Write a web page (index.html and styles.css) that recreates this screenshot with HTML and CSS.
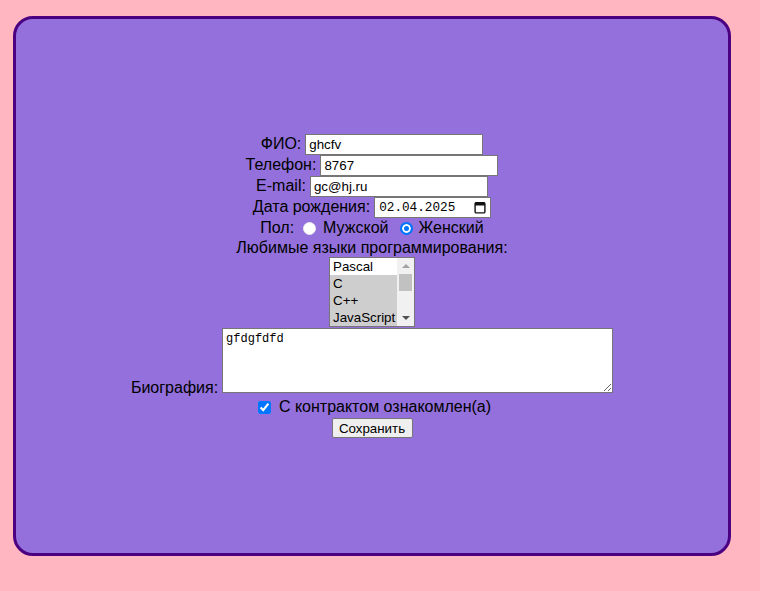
FILE: index.html
```html
<!DOCTYPE html>
<html lang="ru">
<head>
<meta charset="utf-8">
<title>Форма</title>
<link rel="stylesheet" href="styles.css">
</head>
<body>
<div class="page">
  <div class="card">
    <form class="form">
      <div class="row"><label class="lbl">ФИО:</label><input class="text" type="text" value="ghcfv"></div>
      <div class="row"><label class="lbl">Телефон:</label><input class="text" type="text" value="8767"></div>
      <div class="row"><label class="lbl">E-mail:</label><input class="text" type="text" value="gc@hj.ru"></div>
      <div class="row"><label class="lbl">Дата рождения:</label>
        <div class="date"><span class="date-val">02.04.2025</span>
          <svg class="cal" width="12" height="13" viewBox="0 0 12 13"><rect x="1.1" y="1.6" width="9.8" height="10.3" rx="1.2" fill="none" stroke="#111" stroke-width="1.4"/><rect x="1" y="1.5" width="10" height="3" fill="#111"/></svg>
        </div>
      </div>
      <div class="row"><span class="lbl-plain">Пол:</span><span class="radio r1"></span><span>Мужской</span><span class="radio r2 on"></span><span>Женский</span></div>
      <div class="row row-short"><span>Любимые языки программирования:</span></div>
      <div class="listbox" role="listbox">
        <div class="opts">
          <div class="opt">Pascal</div>
          <div class="opt sel">C</div>
          <div class="opt sel">C++</div>
          <div class="opt sel">JavaScript</div>
        </div>
        <div class="sbar">
          <span class="arr up"></span>
          <span class="thumb"></span>
          <span class="arr down"></span>
        </div>
      </div>
      <div class="row row-bio"><label class="lbl bio-lbl">Биография:</label><textarea class="bio">gfdgfdfd</textarea></div>
      <div class="row"><input class="check" type="checkbox" checked><span>С контрактом ознакомлен(а)</span></div>
      <div class="row"><button class="btn" type="button">Сохранить</button></div>
    </form>
  </div>
</div>
</body>
</html>
```

FILE: styles.css
```css
body {
  margin: 0;
  background: #FFB6C1;
  font-family: "Liberation Sans", Arial, sans-serif;
  color: #000;
}

.page {
  padding: 16px 0 0 13px;
}

.card {
  width: 718px;
  height: 540px;
  box-sizing: border-box;
  border: 3px solid #4B0082;
  border-radius: 20px;
  background: #9370DB;
  display: flex;
  align-items: center;
  justify-content: center;
}

.form {
  display: flex;
  flex-direction: column;
  align-items: center;
  margin: 0;
}

.row {
  display: flex;
  align-items: center;
  justify-content: center;
  height: 21px;
  font-size: 16px;
  white-space: nowrap;
}

.row-short {
  height: 18px;
}

.lbl {
  margin-right: 4px;
}

.text {
  width: 178px;
  height: 21px;
  box-sizing: border-box;
  border: 1px solid #767676;
  border-radius: 0;
  padding: 1px 3px;
  margin: 0;
  background: #fff;
  font-family: "Liberation Sans", Arial, sans-serif;
  font-size: 13.33px;
  color: #000;
}

.date {
  width: 117px;
  height: 21px;
  box-sizing: border-box;
  border: 1px solid #767676;
  background: #fff;
  display: flex;
  align-items: center;
  justify-content: space-between;
  padding: 0 4px 0 4px;
}

.date-val {
  font-family: "Liberation Mono", "DejaVu Sans Mono", monospace;
  font-size: 12.7px;
  color: #000;
}

.cal {
  display: block;
}

.lbl-plain {
  margin-right: 9px;
}

.radio {
  width: 13px;
  height: 13px;
  box-sizing: border-box;
  border-radius: 50%;
  background: #fff;
  border: 1px solid #ececec;
}

.r1 {
  margin-right: 7px;
}

.r2 {
  margin-left: 11px;
  margin-right: 6px;
}

.radio.on {
  border: 2px solid #0075ff;
  background: #0075ff;
  box-shadow: inset 0 0 0 2px #fff;
}

.listbox {
  width: 86px;
  height: 70px;
  box-sizing: border-box;
  border: 1px solid #767676;
  background: #fff;
  display: flex;
}

.opts {
  flex: 1;
  font-size: 13.33px;
}

.opt {
  height: 17px;
  line-height: 17px;
  padding-left: 3px;
  white-space: nowrap;
}

.opt.sel {
  background: #cecece;
}

.sbar {
  width: 17px;
  background: #f1f1f1;
  display: flex;
  flex-direction: column;
  align-items: center;
}

.arr {
  width: 0;
  height: 0;
  border-left: 4px solid transparent;
  border-right: 4px solid transparent;
}

.arr.up {
  border-bottom: 4px solid #a3a3a3;
  margin-top: 6px;
  margin-bottom: 6px;
}

.arr.down {
  border-top: 4px solid #505050;
  margin-top: auto;
  margin-bottom: 6px;
}

.thumb {
  width: 13px;
  height: 17px;
  background: #c1c1c1;
}

.row-bio {
  height: 70px;
  align-items: flex-end;
}

.bio-lbl {
  line-height: 18px;
}

.bio {
  width: 391px;
  height: 65px;
  box-sizing: border-box;
  border: 1px solid #767676;
  padding: 3px 3px;
  margin: 0 0 4px 0;
  font-family: "Liberation Mono", "DejaVu Sans Mono", monospace;
  font-size: 12px;
  background: #fff;
  color: #000;
}

.check {
  width: 13px;
  height: 13px;
  margin: 0 8px 0 5px;
  accent-color: #0075ff;
}

.btn {
  width: 81px;
  height: 20px;
  box-sizing: border-box;
  border: 1px solid #767676;
  border-radius: 2px;
  background: #efefef;
  font-family: "Liberation Sans", Arial, sans-serif;
  font-size: 13.33px;
  color: #000;
  padding: 0;
}
```
